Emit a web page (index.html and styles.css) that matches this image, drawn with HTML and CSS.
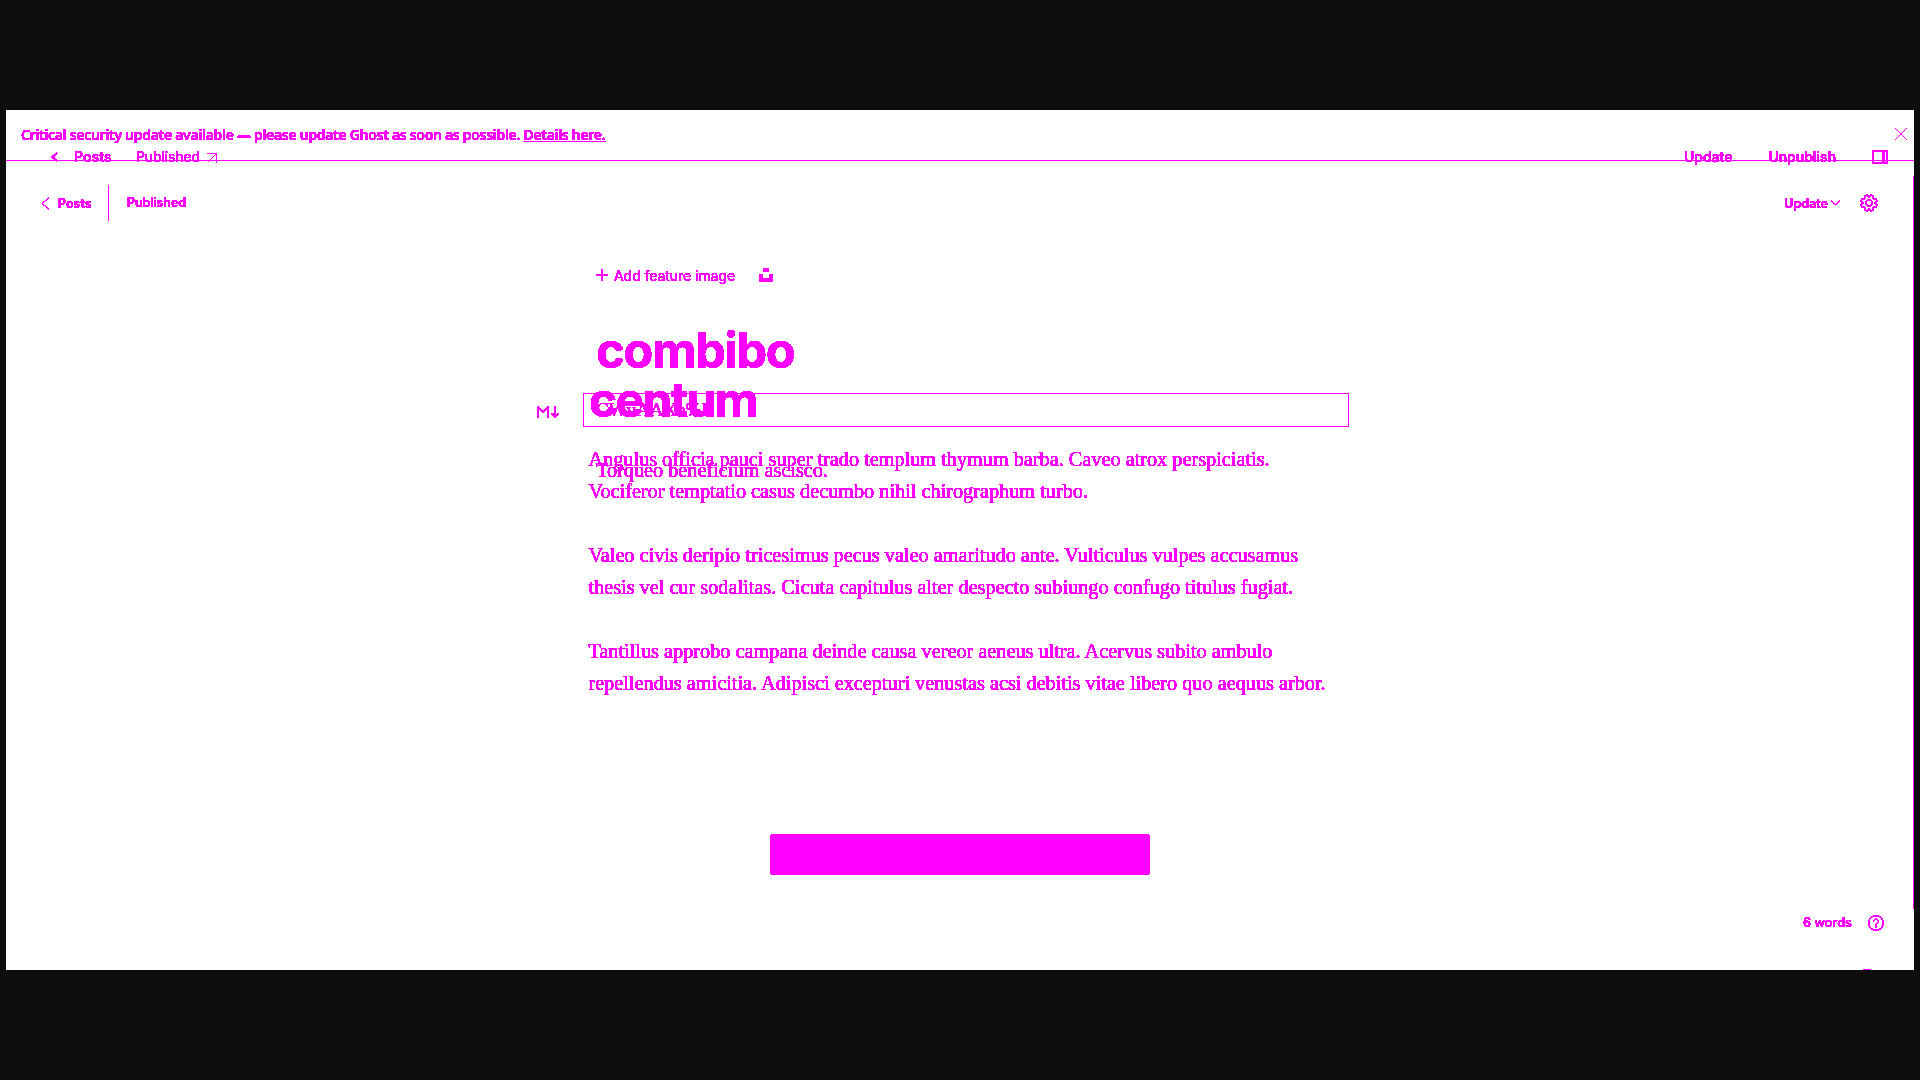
FILE: index.html
```html
<!DOCTYPE html>
<html lang="en">
<head>
<meta charset="utf-8">
<title>Editor</title>
<link rel="stylesheet" href="styles.css">
</head>
<body>
<svg class="defs" aria-hidden="true">
  <filter id="crisp" x="0" y="0" width="100%" height="100%" color-interpolation-filters="sRGB">
    <feComponentTransfer><feFuncA type="linear" slope="40" intercept="-3"/></feComponentTransfer>
  </filter>
</svg>
<div class="frame">
  <div class="layer">
    <div class="banner"><span class="notice">Critical security update available — please update Ghost as soon as possible. <u>Details here.</u></span>
      <svg class="close" width="12" height="12" viewBox="0 0 12 12" shape-rendering="crispEdges"><path d="M0 0L12 12M12 0L0 12" stroke-width="1"/></svg>
    </div>
    <header class="header">
      <svg width="9" height="13" viewBox="0 0 9 13"><path d="M8 .7L1 6.5L8 12.3" stroke-width=".9"/></svg>
      <span class="back">Posts</span>
      <i class="divider"></i>
      <span class="status">Published</span>
      <span class="update">Update</span>
      <svg class="chevron" width="9" height="6" viewBox="0 0 9 6"><path d="M.5 .5L4.5 5L8.500 .5" stroke-width="1"/></svg>
      <svg class="gear" width="18" height="18" viewBox="0 0 18 18"><circle cx="9" cy="9" r="3"/><path d="M7 1.2L9 2.7L11 1.2L13 2L13.4 4.5L16 5L16.8 7L15.2 9L16.8 11L16 13L13.4 13.5L13 16L11 16.8L9 15.3L7 16.8L5 16L4.600 13.5L2 13L1.200 11L2.800 9L1.200 7L2 5L4.600 4.500L5 2Z"/></svg>
    </header>
    <main class="content">
      <div class="card"><svg class="mark" width="23" height="12" viewBox="0 0 23 12"><path d="M1 12V1.500L6 6L11 1.500V12M18 0V11M15 7.500L18 10.500L21.500 7.500" stroke-width="1.500"/></svg></div>
      <p>Angulus officia pauci super trado templum thymum barba. Caveo atrox perspiciatis.<br>Vociferor temptatio casus decumbo nihil chirographum turbo.</p>
      <p>Valeo civis deripio tricesimus pecus valeo amaritudo ante. Vulticulus vulpes accusamus<br>thesis vel cur sodalitas. Cicuta capitulus alter despecto subiungo confugo titulus fugiat.</p>
      <p>Tantillus approbo campana deinde causa vereor aeneus ultra. Acervus subito ambulo<br>repellendus amicitia. Adipisci excepturi venustas acsi debitis vitae libero quo aequus arbor.</p>
      <div class="bar"></div>
    </main>
    <footer class="footer">
      <span class="words">6 words</span>
      <svg width="16" height="16" viewBox="0 0 16 16"><circle cx="8" cy="8" r="7.400"/><path d="M5.600 6.400C5.600 3.400 10.500 3.400 10.500 6.200C10.500 8 8 8 8 10.300M8 11.200V12.700"/></svg>
    </footer>
    <div class="foot-edge"></div>
  </div>
  <div class="layer over">
    <div class="toolbar">
      <svg width="7" height="10" viewBox="0 0 7 10"><path d="M6 .7L1.500 5L6 9.300" stroke-width="1.500"/></svg>
      <span class="t-back">Posts</span>
      <span class="t-status">Published</span>
      <svg class="out" width="10" height="10" viewBox="0 0 10 10"><path d="M0 .5H9.500V9.500M9 1L1 9" stroke-width="1"/></svg>
      <span class="t-update">Update</span>
      <span class="t-unpublish">Unpublish</span>
      <svg class="panel" width="16" height="14" viewBox="0 0 16 14"><rect x="1" y="1" width="14" height="12" rx="1" stroke-width="2"/><path d="M11.500 0V14" stroke-width="2"/></svg>
    </div>
    <div class="feature">
      <svg width="12" height="12" viewBox="0 0 12 12" shape-rendering="crispEdges"><path d="M0 6H12M6 0V12" stroke-width="2"/></svg>
      <span class="add">Add feature image</span>
      <svg width="14" height="14" viewBox="0 0 14 14" shape-rendering="crispEdges"><path class="solid" d="M4 0H10V4H4ZM0 6H4V10H10V6H14V14H0Z"/></svg>
    </div>
    <h1><span class="line-one">combibo</span><span class="line-two">centum</span></h1>
    <div class="ghost-line">CWvAAXe%L</div>
    <div class="excerpt">Torqueo beneficium ascisco.</div>
  </div>
  <i class="rail"></i>
</div>
</body>
</html>
```
FILE: styles.css
```css
* { box-sizing: border-box; }
body { margin: 0; height: 1080px; background: #0d0d0d; overflow: hidden; padding: 110px 6px; }
.defs { position: absolute; width: 0; height: 0; }
.frame { display: grid; position: relative; height: 860px; background: #fff; color: #f0f; font-family: Inter, sans-serif; overflow: hidden; }
.layer { grid-area: 1 / 1; display: flex; flex-direction: column; height: 860px; min-width: 0; filter: url(#crisp); white-space: nowrap; }
svg { fill: none; stroke: #f0f; stroke-width: 1; flex: none; display: block; }
.solid { fill: #f0f; stroke: none; }
.banner { height: 51px; border-bottom: 1px solid #f0f; display: flex; justify-content: space-between; padding: 15px 7px 0 15px; font: 600 14px/20px "Noto Sans", sans-serif; letter-spacing: -.3px; }
.notice u { text-underline-offset: 1px; text-decoration-thickness: 1px; }
.close { margin-top: 3px; }
.header { height: 84px; display: flex; align-items: center; padding: 0 36px 0 35px; font-size: 12.500px; font-weight: 600; }
.back { margin-left: 8px; width: 50px; }
.divider { width: 1px; height: 36px; background: #f0f; }
.status { margin: 0 0 2px 18px; letter-spacing: -.1px; }
.update { margin-left: auto; }
.chevron { margin-left: 3px; }
.gear { margin-left: 20px; stroke-width: 1.100; }
.content { padding: 148px 565px 0 577px; font: 20.250px/32px "Liberation Serif", serif; }
.card { position: relative; height: 34px; width: 766px; border: 1px solid #f0f; margin-bottom: 16px; }
.mark { position: absolute; left: -47px; top: 12px; }
.content p { margin: 0 0 32px 5.400px; }
.bar { margin: 135px 0 0 187px; width: 380px; height: 41px; border-radius: 4px; background: #f0f; }
.footer { display: flex; align-items: center; justify-content: flex-end; gap: 16px; height: 16px; margin-top: 40px; padding-right: 30px; font-size: 12.750px; font-weight: 500; }
.words { margin-bottom: 1px; }
.foot-edge { width: 8px; height: 1px; background: #f0f; margin: auto 43px 0 auto; }
.toolbar { height: 94px; padding: 0 26px 1px 45px; display: flex; align-items: center; font-size: 14px; }
.t-back { margin-left: 16px; font-weight: 600; width: 62px; }
.t-status { letter-spacing: -.1px; }
.out { margin: 2px 0 0 7px; }
.t-update { margin-left: auto; font-weight: 500; }
.t-unpublish { margin-left: 36px; font-weight: 600; letter-spacing: -.1px; }
.panel { margin-left: 36px; }
.feature { display: flex; align-items: center; padding-left: 590px; height: 20px; margin-top: 61px; font-size: 14px; }
.add { margin: 0 24px 0 6px; letter-spacing: -.05px; }
h1 { margin: 41px 0 0 590px; font-size: 49px; line-height: 49px; font-weight: 700; letter-spacing: -1.500px; display: flex; flex-direction: column; }
.line-two { margin-left: -7px; font-size: 48px; letter-spacing: -1.700px; }
.ghost-line { height: 24px; margin: -26px 0 0 590px; font: 19px/24px "Liberation Serif", serif; }
.excerpt { margin: 36px 0 0 590px; font: 20.250px/24px "Liberation Serif", serif; }
.rail { position: absolute; right: 0; top: 66px; width: 1px; height: 733px; background: #f0f; }
```
